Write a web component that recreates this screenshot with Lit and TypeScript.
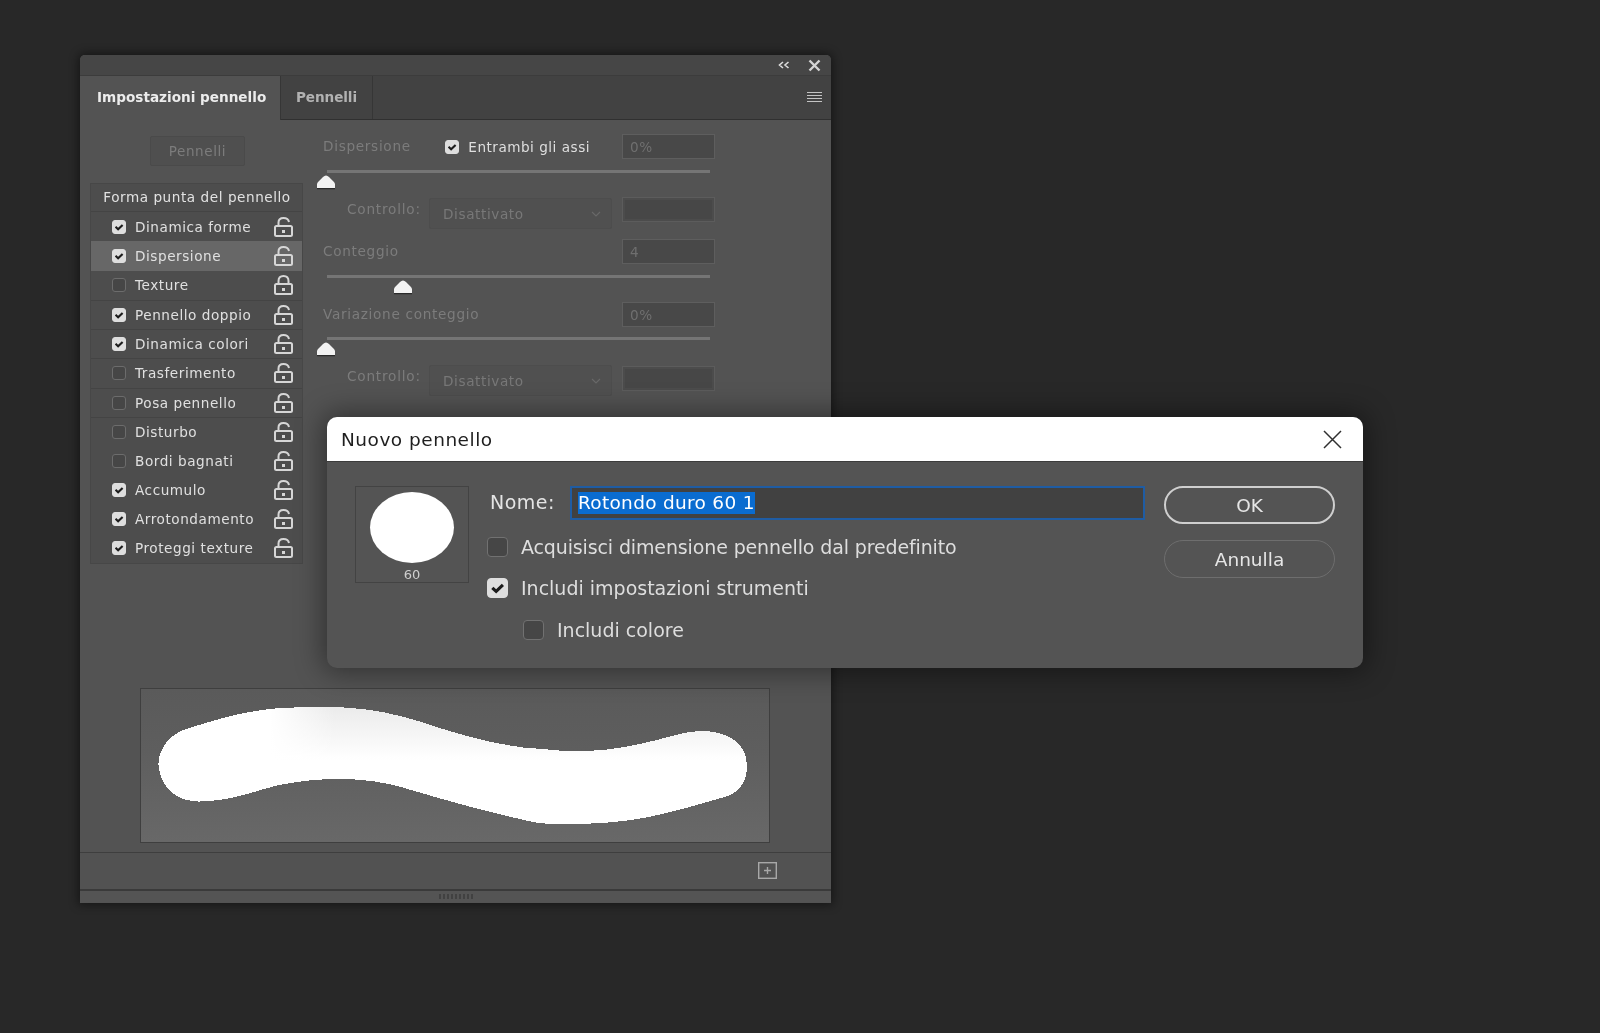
import { LitElement, html, css, svg } from "lit";
import { customElement } from "lit/decorators.js";

const LIST: { label: string; on: boolean; sel?: boolean; closed?: boolean; sep: boolean }[] = [
  { label: "Dinamica forme", on: true, sep: false },
  { label: "Dispersione", on: true, sel: true, sep: false },
  { label: "Texture", on: false, closed: true, sep: false },
  { label: "Pennello doppio", on: true, sep: true },
  { label: "Dinamica colori", on: true, sep: true },
  { label: "Trasferimento", on: false, sep: true },
  { label: "Posa pennello", on: false, sep: true },
  { label: "Disturbo", on: false, sep: true },
  { label: "Bordi bagnati", on: false, sep: false },
  { label: "Accumulo", on: true, sep: false },
  { label: "Arrotondamento", on: true, sep: false },
  { label: "Proteggi texture", on: true, sep: false },
];

const STROKE =
  "M18.5 77 C18 60 31 45 49 40 C85 29 115 20 154 19.5 C172 18.5 190 18 204 19.5 C235 21 258 27 278 33 C320 47 365 60 403 61 C425 63.5 440 64 447 63 C475 62 495 57 517 52 C535 47 548 43 562 43 C580 43 607 50 607 78 C607 95 598 104 588 108 C570 113 555 118 530 124 C500 132 470 136 427 136 C405 137 392 134 380 131 C340 122 305 112 278 104 C255 97 240 93 215 91.5 C190 90 165 92 139 97 C115 103 95 111 74 112.5 C65 113.5 58 114 52 113 C35 111 20 98 18.5 77 Z";

const previewSvg = svg`
  <defs>
    <linearGradient id="sv" gradientUnits="userSpaceOnUse" x1="0" y1="19" x2="0" y2="72">
      <stop offset="0" stop-color="#ebebeb"/><stop offset="1" stop-color="#ffffff"/>
    </linearGradient>
    <linearGradient id="sh" gradientUnits="userSpaceOnUse" x1="130" y1="0" x2="195" y2="0">
      <stop offset="0" stop-color="#ffffff"/><stop offset="1" stop-color="#ffffff" stop-opacity="0"/>
    </linearGradient>
  </defs>
  <path d=${STROKE} fill="url(#sv)" shape-rendering="crispEdges"/>
  <path d=${STROKE} fill="url(#sh)" shape-rendering="crispEdges"/>
`;

const lock = (closed?: boolean) => html`<svg class="lock" viewBox="0 0 19 20" fill="none" stroke="#d6d6d6" stroke-width="2">
  <rect x="1" y="9" width="17" height="10" rx="1.500"/>
  ${closed
    ? svg`<path d="M4.500 9V6C4.500 3 6.500 1 9.500 1S14.500 3 14.500 6V9"/>`
    : svg`<path d="M4.500 9V5.500C4.500 2.600 6.500 1 9.500 1C12.500 1 14.500 2.400 15 5"/>`}
  <rect x="8" y="13" width="3" height="3" fill="#d6d6d6" stroke="none"/>
</svg>`;

const box = (on: boolean, cls = "") => html`<span class="box ${on ? "on" : ""} ${cls}">${on
  ? html`<svg viewBox="0 0 16 16" fill="none" stroke="#1c1c1c" stroke-width="2.800"><path d="M3.400 7.800 6.800 11 12.800 5.200"/></svg>`
  : ""}</span>`;

const chevron = html`<svg class="chev" viewBox="0 0 10 6" fill="none" stroke="#686868" stroke-width="1.1"><path d="M1 1l4 4 4-4"/></svg>`;

const thumb = (left: number) => html`<svg class="thumb" style="left:${left}px" viewBox="0 0 20 16">
  <path d="M10 1.500C11 1.500 12 2 13 3L18 8C18.700 8.700 19 9.500 19 10.500V14H1V10.500C1 9.500 1.300 8.700 2 8L7 3C8 2 9 1.500 10 1.500Z" fill="#f2f2f2"/>
  <path d="M1 14.600H19" stroke="#2a2a2a" stroke-width="1.400"/>
</svg>`;

@customElement("app-root")
export class AppRoot extends LitElement {
  static styles = css`
    :host {
      display: block;
      position: relative;
      width: 1600px;
      height: 1033px;
      overflow: hidden;
      background: #282828;
      font-family: "DejaVu Sans", Verdana, sans-serif;
      filter: blur(0.4px);
    }
    /* ---------- panel ---------- */
    .panel {
      position: absolute;
      left: 80px;
      top: 55px;
      width: 751px;
      height: 848px;
      background: #535353;
      border-radius: 5px 5px 0 0;
      box-shadow: 0 0 10px 2px rgba(0, 0, 0, 0.45);
      display: flex;
      flex-direction: column;
      overflow: hidden;
    }
    .titlebar {
      height: 20px;
      flex: none;
      background: #464646;
      border-bottom: 1px solid #3c3c3c;
      display: flex;
      align-items: center;
      justify-content: flex-end;
      gap: 18px;
      padding-right: 10px;
    }
    .titlebar svg { display: block; }
    .tabs {
      height: 43px;
      flex: none;
      background: #424242;
      border-bottom: 1px solid #303030;
      display: flex;
      align-items: stretch;
    }
    .tab {
      display: flex;
      align-items: center;
      font-weight: 700;
      font-size: 13.6px;
      color: #b2b2b2;
      padding: 0 0 2px 17px;
      box-sizing: border-box;
      border-right: 1px solid #363636;
    }
    .tab.active {
      width: 201px;
      background: #535353;
      color: #ececec;
      margin-bottom: -1px;
      position: relative;
    }
    .tab.second { width: 92px; padding-left: 15px; letter-spacing: -0.1px; }
    .menu { margin: 0 9px 2px auto; align-self: center; display: block; }
    .body { flex: 1; display: flex; flex-direction: column; min-height: 0; }
    .columns { display: flex; height: 443px; flex: none; }
    .left { width: 213px; margin-left: 10px; flex: none; }
    .pbtn {
      display: flex;
      width: 95px;
      height: 30px;
      margin: 16px auto 17px 60px;
      box-sizing: border-box;
      align-items: center;
      justify-content: center;
      background: #4f4f4f;
      border: 1px solid #4a4a4a;
      border-radius: 2px;
      font-size: 13.5px;
      letter-spacing: 0.6px;
      color: #7c7c7c;
    }
    .list {
      border: 1px solid #474747;
      background: #4d4d4d;
      width: 213px;
      box-sizing: border-box;
    }
    .head {
      height: 28px;
      box-sizing: border-box;
      padding: 0 0 2px 1px;
      display: flex;
      align-items: center;
      justify-content: center;
      font-size: 13.6px;
      letter-spacing: 0.55px;
      color: #e2e2e2;
      border-bottom: 1px solid #444;
    }
    .row {
      height: 29.25px;
      box-sizing: border-box;
      display: flex;
      align-items: center;
      padding-left: 21px;
      font-size: 13.6px;
      letter-spacing: 0.55px;
      color: #e0e0e0;
      gap: 9px;
    }
    .row.sep { border-top: 1px solid #444; }
    .row.sel { background: #676767; }
    .row .txt { flex: 1; }
    .lock { width: 19px; height: 20px; margin-right: 9px; display: block; flex: none; }
    .box {
      width: 14px;
      height: 14px;
      flex: none;
      box-sizing: border-box;
      border-radius: 3px;
      background: #464646;
      border: 1px solid #6c6c6c;
      display: inline-flex;
    }
    .box.on { background: #dedede; border-color: #dedede; }
    .box svg { width: 100%; height: 100%; display: block; }
    .box.big { width: 21px; height: 20px; border-radius: 4px; border-color: #717171; }
    .box.big.on { border-color: #dedede; }

    .right {
      margin-left: 19px;
      width: 393px;
      padding-top: 14px;
      flex: none;
      color: #7c7c7c;
      font-size: 13.6px;
    }
    .line { display: flex; align-items: center; height: 25px; }
    .line .lab { flex: 1; padding: 0 0 2px 1px; letter-spacing: 0.7px; }
    .num {
      width: 93px;
      height: 25px;
      flex: none;
      box-sizing: border-box;
      background: #484848;
      border: 1px solid #5e5e5e;
      color: #6f6f6f;
      padding-left: 7px;
      display: flex;
      align-items: center;
      font-size: 13.6px;
      letter-spacing: 0.5px;
    }
    .num.blank { border-color: #5c5c5c; background: #474747; box-shadow: inset 0 0 0 2px #4c4c4c; }
    .both { display: flex; align-items: center; gap: 9px; color: #dfdfdf; margin-right: 32px; letter-spacing: 0.5px; }
    .slider { position: relative; height: 3px; margin: 11px 5px 0; width: 383px; background: #757575; }
    .thumb { position: absolute; top: 4px; margin-left: -11px; width: 20px; height: 16px; display: block; }
    .ctrl { display: flex; margin-top: 25px; padding-left: 25px; height: 31px; }
    .ctrl .lab { width: 82px; padding-top: 3px; letter-spacing: 0.8px; flex: none; }
    .select {
      width: 183px;
      height: 31px;
      box-sizing: border-box;
      background: #505050;
      border: 1px solid #4d4d4d;
      border-radius: 2px;
      padding: 0 10px 0 13px;
      display: flex;
      align-items: center;
      justify-content: space-between;
      color: #787878;
      letter-spacing: 0.6px;
      margin-right: 10px;
    }
    .chev { width: 10px; height: 6px; display: block; }
    .ctrl .num { margin-top: -1px; }
    .gap1 { margin-top: 10px; }
    .gap2 { margin-top: 24px; }
    .slider.track3 { margin-top: 10px; }
    .ctrl.low { margin-top: 25px; }
    .ctrl.low .num { margin-top: 1px; }

    .preview {
      margin: 125px 0 0 60px;
      width: 630px;
      height: 155px;
      box-sizing: border-box;
      border: 1.5px solid #3f3f3f;
      background: linear-gradient(180deg, #5a5a5a 0%, #5e5e5e 40%, #686868 100%);
      flex: none;
      overflow: hidden;
    }
    .preview svg { display: block; margin: -1.5px; width: 630px; height: 155px; }
    .spacer { height: 9px; flex: none; }
    .foot {
      height: 37px;
      flex: none;
      border-top: 1px solid #3e3e3e;
      display: flex;
      align-items: center;
      justify-content: flex-end;
      padding: 0 54px 2px 0;
      box-sizing: border-box;
      background: #525252;
    }
    .foot svg { display: block; }
    .grip {
      height: 13px;
      flex: none;
      box-sizing: border-box;
      border-top: 2px solid #3a3a3a;
      background: #545454;
      display: flex;
      align-items: center;
      justify-content: center;
    }
    .grip i {
      display: block;
      width: 34px;
      height: 5px;
      background: repeating-linear-gradient(90deg, #414141 0 2px, transparent 2px 4px);
    }

    /* ---------- dialog ---------- */
    .dialog {
      position: absolute;
      left: 327px;
      top: 417px;
      width: 1036px;
      height: 251px;
      border-radius: 10px;
      background: #545454;
      box-shadow: 0 0 28px 4px rgba(0, 0, 0, 0.42);
      overflow: hidden;
      display: flex;
      flex-direction: column;
      color: #e4e4e4;
    }
    .dhead {
      height: 45px;
      flex: none;
      background: #fff;
      border-bottom: 1px solid #3c3c3c;
      box-sizing: border-box;
      display: flex;
      align-items: center;
      justify-content: space-between;
      padding: 0 21px 0 14px;
      color: #1f1f1f;
      font-size: 18.5px;
      letter-spacing: 0.5px;
    }
    .dhead svg { display: block; }
    .dbody { flex: 1; display: flex; padding: 24px 28px 0 28px; }
    .thumbbox {
      width: 114px;
      height: 97px;
      box-sizing: border-box;
      border: 1px solid #434343;
      flex: none;
      display: flex;
      flex-direction: column;
      align-items: center;
      padding-top: 5px;
    }
    .dot { width: 84px; height: 71px; border-radius: 50%; background: #fff; flex: none; }
    .size { font-size: 13px; color: #cfcfcf; margin-top: 4px; line-height: 16px; }
    .form { flex: 1; margin-left: 19px; display: flex; flex-direction: column; }
    .name { display: flex; align-items: center; height: 34px; }
    .name .nl { width: 82px; font-size: 19px; letter-spacing: 0.5px; padding-left: 2px; box-sizing: border-box; margin-top: -3px; }
    .field {
      width: 575px;
      height: 34px;
      box-sizing: border-box;
      background: #414141;
      border: 2px solid #1f5ca3;
      padding-left: 6px;
      display: flex;
      align-items: center;
    }
    .field span {
      background: #0a6cd0;
      color: #fff;
      font-size: 18.5px;
      letter-spacing: 0.3px;
      line-height: 22px;
    }
    .opt { display: flex; align-items: center; gap: 13px; font-size: 19px; height: 30px; color: #dedede; }
    .opt.o1 { margin-top: 12px; margin-left: -1px; letter-spacing: -0.13px; }
    .opt.o2 { margin-top: 11px; margin-left: -1px; }
    .opt.o3 { margin-top: 12px; margin-left: 35px; }
    .btns { width: 171px; margin-left: 19px; flex: none; display: flex; flex-direction: column; gap: 16px; }
    .btn {
      height: 38px;
      box-sizing: border-box;
      border-radius: 19px;
      display: flex;
      align-items: center;
      justify-content: center;
      padding-top: 1px;
      font-size: 18.5px;
      color: #e6e6e6;
      border: 1.5px solid #6e6e6e;
    }
    .btn.ok { border: 2px solid #cfcfcf; }
  `;

  render() {
    return html`
      <section class="panel">
        <div class="titlebar">
          <svg width="12" height="8" viewBox="0 0 12 8" fill="none" stroke="#dcdcdc" stroke-width="1.6"><path d="M5 1 1.500 4 5 7M10.500 1 7 4l3.500 3"/></svg>
          <svg width="13" height="13" viewBox="0 0 13 13" fill="none" stroke="#d4d4d4" stroke-width="2.4"><path d="M1.500 1.500l10 10M11.500 1.500l-10 10"/></svg>
        </div>
        <div class="tabs">
          <div class="tab active">Impostazioni pennello</div>
          <div class="tab second">Pennelli</div>
          <svg class="menu" width="15" height="10" viewBox="0 0 15 10" stroke="#c4c4c4" stroke-width="1"><path d="M0 .5h15M0 3.500h15M0 6.500h15M0 9.500h15"/></svg>
        </div>
        <div class="body">
          <div class="columns">
            <div class="left">
              <div class="pbtn">Pennelli</div>
              <div class="list">
                <div class="head">Forma punta del pennello</div>
                ${LIST.map(
                  (r) => html`<div class="row ${r.sel ? "sel" : ""} ${r.sep ? "sep" : ""}">
                    ${box(r.on)}<span class="txt">${r.label}</span>${lock(r.closed)}
                  </div>`
                )}
              </div>
            </div>
            <div class="right">
              <div class="line">
                <span class="lab">Dispersione</span>
                <span class="both">${box(true)}Entrambi gli assi</span>
                <div class="num">0%</div>
              </div>
              <div class="slider">${thumb(0)}</div>
              <div class="ctrl">
                <span class="lab">Controllo:</span>
                <div class="select">Disattivato ${chevron}</div>
                <div class="num blank"></div>
              </div>
              <div class="line gap1">
                <span class="lab">Conteggio</span>
                <div class="num">4</div>
              </div>
              <div class="slider">${thumb(77)}</div>
              <div class="line gap2">
                <span class="lab">Variazione conteggio</span>
                <div class="num">0%</div>
              </div>
              <div class="slider track3">${thumb(0)}</div>
              <div class="ctrl low">
                <span class="lab">Controllo:</span>
                <div class="select">Disattivato ${chevron}</div>
                <div class="num blank"></div>
              </div>
            </div>
          </div>
          <div class="preview">
            <svg viewBox="0 0 630 155">${previewSvg}</svg>
          </div>
          <div class="spacer"></div>
          <div class="foot">
            <svg width="19" height="17" viewBox="0 0 19 17" fill="none" stroke="#a8a8a8" stroke-width="1.4"><rect x=".7" y=".7" width="17.6" height="15.6"/><path d="M9.500 5v7M6 8.500h7"/></svg>
          </div>
          <div class="grip"><i></i></div>
        </div>
      </section>

      <section class="dialog">
        <div class="dhead">
          <span>Nuovo pennello</span>
          <svg width="19" height="19" viewBox="0 0 19 19" fill="none" stroke="#303030" stroke-width="1.5"><path d="M1 1l17 17M18 1 1 18"/></svg>
        </div>
        <div class="dbody">
          <div class="thumbbox">
            <div class="dot"></div>
            <div class="size">60</div>
          </div>
          <div class="form">
            <div class="name">
              <span class="nl">Nome:</span>
              <div class="field"><span>Rotondo duro 60 1</span></div>
            </div>
            <label class="opt o1">${box(false, "big")}Acquisisci dimensione pennello dal predefinito</label>
            <label class="opt o2">${box(true, "big")}Includi impostazioni strumenti</label>
            <label class="opt o3">${box(false, "big")}Includi colore</label>
          </div>
          <div class="btns">
            <div class="btn ok">OK</div>
            <div class="btn">Annulla</div>
          </div>
        </div>
      </section>
    `;
  }
}
